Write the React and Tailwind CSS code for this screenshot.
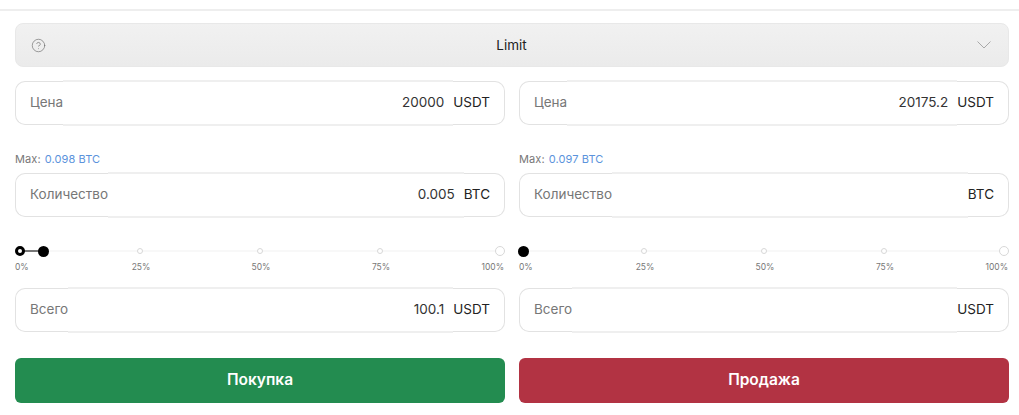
import { CircleHelp } from 'lucide-react';

function Field({ label, value, unit }) {
  return (
    <div className="flex h-[44px] text-[13.5px] leading-none">
      <div className="flex items-center pl-[14px] rounded-l-[10px] border border-r-0 border-[#e2e2e2] text-[#777777]">
        {label}
      </div>
      <div className="flex flex-1 items-center justify-end pr-[9px] -my-px h-[46px] border-y-2 border-[#efefef] text-[#333333]">
        {value}
      </div>
      <div className="flex items-center pr-[14px] rounded-r-[10px] border border-l-0 border-[#e2e2e2] text-[#222222]">
        {unit}
      </div>
    </div>
  );
}

function Slider({ handle }) {
  const marks = ['25%', '50%', '75%'];
  return (
    <div className="h-[71px] pt-[29px]">
      <div className="relative flex h-[10px] items-center justify-between">
        <div className="absolute left-[5px] right-[5px] top-[4px] h-[2px] bg-[#f8f8f8]" />
        {handle > 0 && <div className="absolute left-[5px] top-[4px] h-[2px] w-[24px] bg-[#777777]" />}
        {handle > 0 ? (
          <div className="relative h-[10px] w-[10px] rounded-full border-[3px] border-black bg-white" />
        ) : (
          <div className="relative h-[10px] w-[10px] rounded-full border border-[#dddddd] bg-white" />
        )}
        {marks.map(m => (
          <div key={m} className="relative flex w-[10px] justify-center">
            <div className="h-[6px] w-[6px] rounded-full border border-[#d8d8d8] bg-white" />
          </div>
        ))}
        <div className="relative h-[10px] w-[10px] rounded-full border border-[#d8d8d8] bg-white" />
        <div
          className="absolute top-[-0.5px] h-[11px] w-[11px] rounded-full bg-black"
          style={{ left: handle > 0 ? handle - 1 : -1 }}
        />
      </div>
      <div className="mt-[5px] flex text-[8.5px] leading-[12px] text-[#777777]">
        <span className="w-[66px]">0%</span>
        {marks.map(m => (
          <span key={m} className="w-[120px] text-center">{m}</span>
        ))}
        <span className="flex-1 pr-px text-right">100%</span>
      </div>
    </div>
  );
}

function Column({ price, max, amount, total, handle, action, color }) {
  return (
    <div className="flex flex-col">
      <Field label="Цена" value={price} unit="USDT" />
      <div className="flex h-[48px] items-end gap-[4px] pb-[8px] text-[11px] leading-[12px] tracking-[0.1px]">
        <span className="text-[#777777]">Max:</span>
        <span className="text-[#5b93dc]">{max} BTC</span>
      </div>
      <Field label="Количество" value={amount} unit="BTC" />
      <Slider handle={handle} />
      <Field label="Всего" value={total} unit="USDT" />
      <button className={`mt-[25.5px] h-[45px] rounded-[6px] text-[15.5px] font-semibold text-white ${color}`}>
        {action}
      </button>
    </div>
  );
}

export default function App() {
  return (
    <div className="h-[415px] w-[1019px] overflow-hidden bg-white font-['Inter',sans-serif]">
      <div className="mt-[9px] h-[2px] bg-[#eeeeee]" />
      <div className="pl-[15px] pr-[10px] pt-[12px]">
        <div className="flex h-[44px] items-center justify-between rounded-[8px] border border-[#e8e8e8] bg-gradient-to-b from-[#f1f1f1] to-[#ebebeb] pl-[15px] pr-[17px]">
          <CircleHelp size={15} strokeWidth={1} className="text-[#666666]" />
          <span className="pt-px text-[13.5px] text-[#222222]">Limit</span>
          <svg width="14" height="8" viewBox="0 0 14 8" fill="none" stroke="#a8a8a8" strokeWidth="1">
            <path d="M0.5 0.5 7 7 13.5 0.5" />
          </svg>
        </div>
        <div className="mt-[14px] grid grid-cols-2 gap-[14px]">
          <Column price="20000" max="0.098" amount="0.005" total="100.1" handle={24} action="Покупка" color="bg-[#238c50]" />
          <Column price="20175.2" max="0.097" amount="" total="" handle={0} action="Продажа" color="bg-[#b23343]" />
        </div>
      </div>
    </div>
  );
}
